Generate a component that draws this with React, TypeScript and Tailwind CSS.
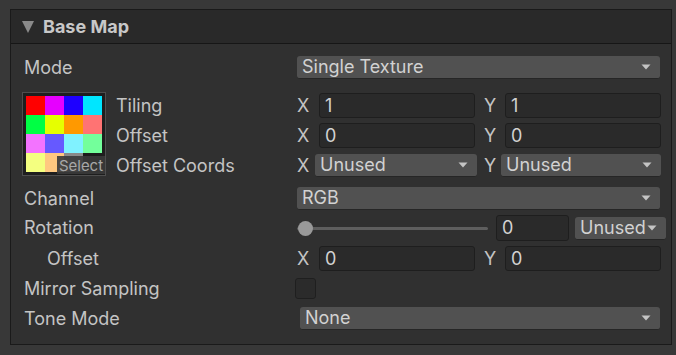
import React from "react";

const Arrow = () => (
  <svg width="10" height="6" viewBox="0 0 10 6" className="shrink-0">
    <path d="M0.5 0.5 L9.5 0.5 L5 5.5 Z" fill="#c4c4c4" />
  </svg>
);

const Dropdown = ({ text, className }: { text: string; className: string }) => (
  <div
    className={`flex items-center justify-between rounded-[3px] bg-[#515151] border-b border-[#262626] pl-[5px] pr-[9px] text-[#d2d2d2] ${className}`}
  >
    <span className="leading-none">{text}</span>
    <Arrow />
  </div>
);

const Field = ({ text, className }: { text: string; className: string }) => (
  <div
    className={`flex items-center rounded-[3px] bg-[#2a2a2a] border border-[#1e1e1e] pl-[5px] text-[#d2d2d2] ${className}`}
  >
    <span className="leading-none">{text}</span>
  </div>
);

const VecPair = ({ x, y }: { x: string; y: string }) => (
  <div className="flex w-[364px] items-center">
    <span className="w-[22px] text-[#c4c4c4] leading-none">X</span>
    <Field text={x} className="h-[25px] w-[156px]" />
    <span className="ml-[9px] w-[21px] text-[#c4c4c4] leading-none">Y</span>
    <Field text={y} className="h-[25px] w-[156px]" />
  </div>
);

const colors = [
  "#ff0000", "#e600ff", "#1e00ff", "#00e6ff",
  "#00ff44", "#e6ff00", "#ff9900", "#ff7373",
  "#f373ff", "#6659ff", "#80f2ff", "#73ff9b",
  "#f4ff80", "#ffc880", "#8a8a8a", "#1c1c1c",
];

export default function App() {
  return (
    <div
      className="w-[676px] h-[355px] bg-[#383838] pt-[9px] pl-[10px] text-[18px] text-[#c4c4c4]"
      style={{ fontFamily: "Inter, 'Noto Sans', sans-serif" }}
    >
      <div className="w-[662px] h-[336px] border border-[#1a1a1a] bg-[#303030] flex flex-col">
        <div className="h-[34px] shrink-0 bg-[#292929] border-b border-[#161616] flex items-center pl-[11px]">
          <svg width="13" height="13" viewBox="0 0 13 13">
            <path d="M0 1 L12 1 L6 13 Z" fill="#8a8a8a" />
          </svg>
          <span className="ml-[8px] font-bold text-[18px] text-[#c8c8c8] leading-none">Base Map</span>
        </div>
        <div className="flex flex-col pl-[13px]">
          {/* Mode */}
          <div className="mt-[12px] h-[23px] flex items-center">
            <span className="w-[273px] leading-none">Mode</span>
            <Dropdown text="Single Texture" className="h-[23px] w-[363px]" />
          </div>
          {/* Texture block */}
          <div className="mt-[13px] flex">
            <div className="relative -ml-[2px] w-[84px] h-[84px] border border-[#4e4e4e] bg-[#1e1e1e] p-[3px]">
              <div className="grid grid-cols-4 w-[76px] h-[76px]">
                {colors.map((c, i) => (
                  <div key={i} style={{ backgroundColor: c }} />
                ))}
              </div>
              <div className="absolute right-0 bottom-[1px] w-[48px] h-[18px] bg-[#3a3a3a]/90 flex items-center justify-center text-[15px] text-[#a8a8a8] leading-none">
                Select
              </div>
            </div>
            <div className="flex flex-col ml-[10px] mt-[1px]">
              <div className="h-[30px] flex items-start">
                <span className="w-[181px] h-[25px] flex items-center leading-none">Tiling</span>
                <VecPair x="1" y="1" />
              </div>
              <div className="h-[30px] flex items-start">
                <span className="w-[181px] h-[25px] flex items-center leading-none">Offset</span>
                <VecPair x="0" y="0" />
              </div>
              <div className="h-[30px] flex items-start">
                <span className="w-[181px] h-[25px] flex items-center leading-none">Offset Coords</span>
                <div className="flex items-center w-[364px] mt-[1px]">
                  <span className="w-[18px] leading-none">X</span>
                  <Dropdown text="Unused" className="h-[23px] w-[162px]" />
                  <span className="ml-[7px] w-[17px] leading-none">Y</span>
                  <Dropdown text="Unused" className="h-[23px] w-[160px]" />
                </div>
              </div>
            </div>
          </div>
          {/* Channel */}
          <div className="mt-[4px] h-[23px] flex items-center">
            <span className="w-[273px] leading-none">Channel</span>
            <Dropdown text="RGB" className="h-[23px] w-[363px]" />
          </div>
          {/* Rotation */}
          <div className="mt-[5px] h-[26px] flex items-center">
            <span className="w-[273px] leading-none">Rotation</span>
            <div className="relative w-[191px] h-[15px] flex items-center">
              <div className="h-[3px] w-full bg-[#5e5e5e] rounded-full" />
              <div className="absolute left-[1px] top-0 w-[15px] h-[15px] rounded-full bg-[#999999]" />
            </div>
            <Field text="0" className="ml-[8px] h-[26px] w-[73px]" />
            <Dropdown text="Unused" className="ml-[6px] h-[23px] w-[91px] pr-[2px] pl-[4px]" />
          </div>
          {/* Offset */}
          <div className="mt-[5px] h-[25px] flex items-center">
            <span className="w-[273px] pl-[23px] leading-none">Offset</span>
            <VecPair x="0" y="0" />
          </div>
          {/* Mirror */}
          <div className="mt-[7px] h-[21px] flex items-center">
            <span className="w-[271px] leading-none">Mirror Sampling</span>
            <div className="w-[21px] h-[21px] rounded-[3px] bg-[#2b2b2b] border border-[#1f1f1f]" />
          </div>
          {/* Tone */}
          <div className="mt-[8px] h-[23px] flex items-center">
            <span className="w-[276px] leading-none">Tone Mode</span>
            <Dropdown text="None" className="h-[23px] w-[360px]" />
          </div>
        </div>
      </div>
    </div>
  );
}
